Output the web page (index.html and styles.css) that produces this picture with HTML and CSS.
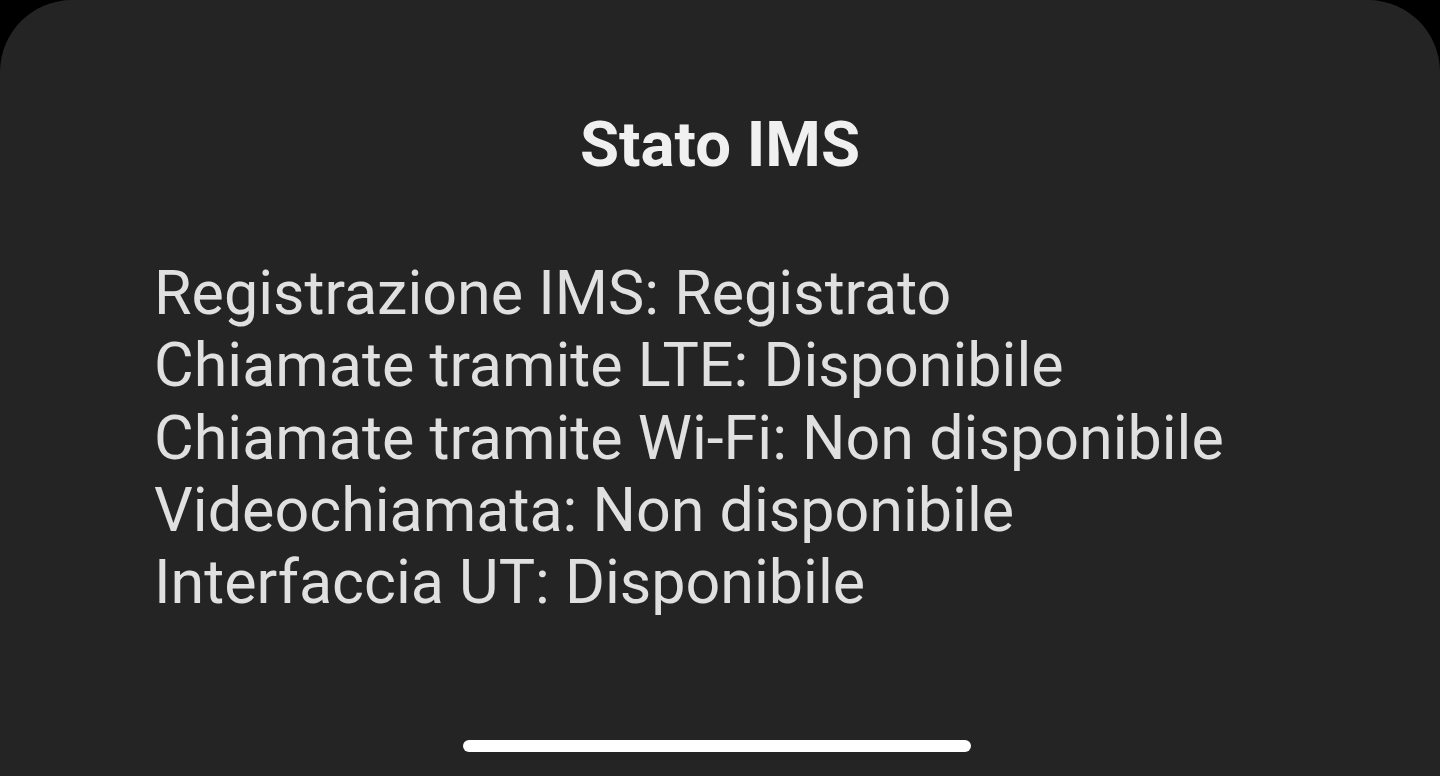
FILE: index.html
```html
<!DOCTYPE html>
<html>
  <head>
    <title>Stato IMS</title>
    <link rel="stylesheet" href="styles.css">
  </head>
  <body>
    <div class="sheet">
      <h1 class="title">Stato IMS</h1>
      <div class="status">
        <p>Registrazione IMS: Registrato</p>
        <p>Chiamate tramite LTE: Disponibile</p>
        <p>Chiamate tramite Wi-Fi: Non disponibile</p>
        <p>Videochiamata: Non disponibile</p>
        <p>Interfaccia UT: Disponibile</p>
      </div>
      <div class="home-bar"></div>
    </div>
  </body>
</html>
```

FILE: styles.css
```css
html, body {
  margin: 0;
  height: 100%;
  background-color: #000;
}

body {
  font-family: Roboto, "Noto Sans", sans-serif;
  overflow: hidden;
}

.sheet {
  height: 776px;
  background-color: #242424;
  border-radius: 72px 72px 0 0;
  display: flex;
  flex-direction: column;
  align-items: center;
}

.title {
  margin: 105px 0 0;
  font-size: 63.5px;
  font-weight: 700;
  line-height: 80px;
  color: #f0f0f0;
}

.status {
  align-self: stretch;
  padding: 72px 0 0 154px;
}

.status p {
  margin: 0;
  font-size: 61px;
  line-height: 72.25px;
  color: #e0e0e0;
}

.home-bar {
  margin-top: auto;
  margin-bottom: 24px;
  margin-right: 6px;
  width: 508px;
  height: 12px;
  border-radius: 6px;
  background-color: #fff;
}
```
